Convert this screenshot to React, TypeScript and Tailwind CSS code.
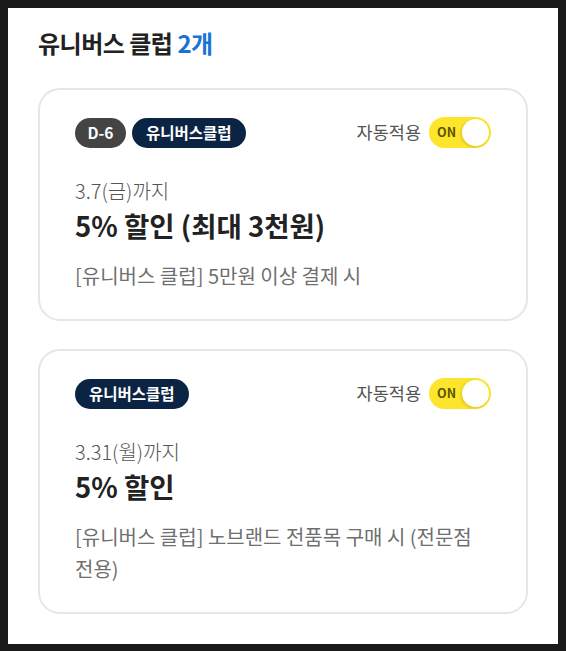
import React from 'react';

type Coupon = {
  dday?: string;
  until: string;
  title: string;
  desc: string;
};

const coupons: Coupon[] = [
  {
    dday: 'D-6',
    until: '3.7(금)까지',
    title: '5% 할인 (최대 3천원)',
    desc: '[유니버스 클럽] 5만원 이상 결제 시',
  },
  {
    until: '3.31(월)까지',
    title: '5% 할인',
    desc: '[유니버스 클럽] 노브랜드 전품목 구매 시 (전문점 전용)',
  },
];

const AutoToggle: React.FC = () => (
  <div className="flex items-center gap-[8px]">
    <span className="text-[17.5px] text-[#555]">자동적용</span>
    <div className="flex h-[31px] w-[62px] items-center justify-between rounded-full bg-[#fce52b] pl-[8px] pr-[2px]">
      <span className="text-[12.5px] font-bold text-[#5c5400]">ON</span>
      <span className="h-[27px] w-[27px] rounded-full bg-white shadow-[-1px_1px_3px_rgba(150,130,0,0.35)]" />
    </div>
  </div>
);

const CouponCard: React.FC<{ coupon: Coupon }> = ({ coupon }) => (
  <div className="rounded-[22px] border-2 border-[#e6e6e6] px-[35px] pt-[27px] pb-[27px]">
    <div className="flex items-center justify-between">
      <div className="flex items-center gap-[6px]">
        {coupon.dday && (
          <span className="flex h-[30px] items-center rounded-full bg-[#444] px-[12.5px] text-[15.5px] font-bold text-white">
            {coupon.dday}
          </span>
        )}
        <span className="flex h-[30px] items-center rounded-full bg-[#0b2444] px-[14px] text-[15.5px] font-bold text-white">
          유니버스클럽
        </span>
      </div>
      <AutoToggle />
    </div>
    <p className="mt-[28px] text-[20px] leading-[30px] font-light text-[#555]">{coupon.until}</p>
    <p className="mt-[0px] text-[27.5px] leading-[38px] font-bold text-[#222]">{coupon.title}</p>
    <p className="mt-[16px] text-[20px] leading-[32px] text-[#6f6f6f]">{coupon.desc}</p>
  </div>
);

export default function App() {
  return (
    <div
      className="min-h-screen bg-[#1a1a1a] p-[8px]"
      style={{ fontFamily: '"Noto Sans CJK KR", "Noto Sans", sans-serif' }}
    >
      <div className="bg-white px-[30px] pt-[18px] pb-[30px]">
        <h1 className="text-[24px] leading-[34px] font-bold tracking-[-0.5px] text-[#222]">
          유니버스 클럽 <span className="text-[#1a73d4]">2개</span>
        </h1>
        <div className="mt-[28px] flex flex-col gap-[28px]">
          {coupons.map((c) => (
            <CouponCard key={c.until} coupon={c} />
          ))}
        </div>
      </div>
    </div>
  );
}
